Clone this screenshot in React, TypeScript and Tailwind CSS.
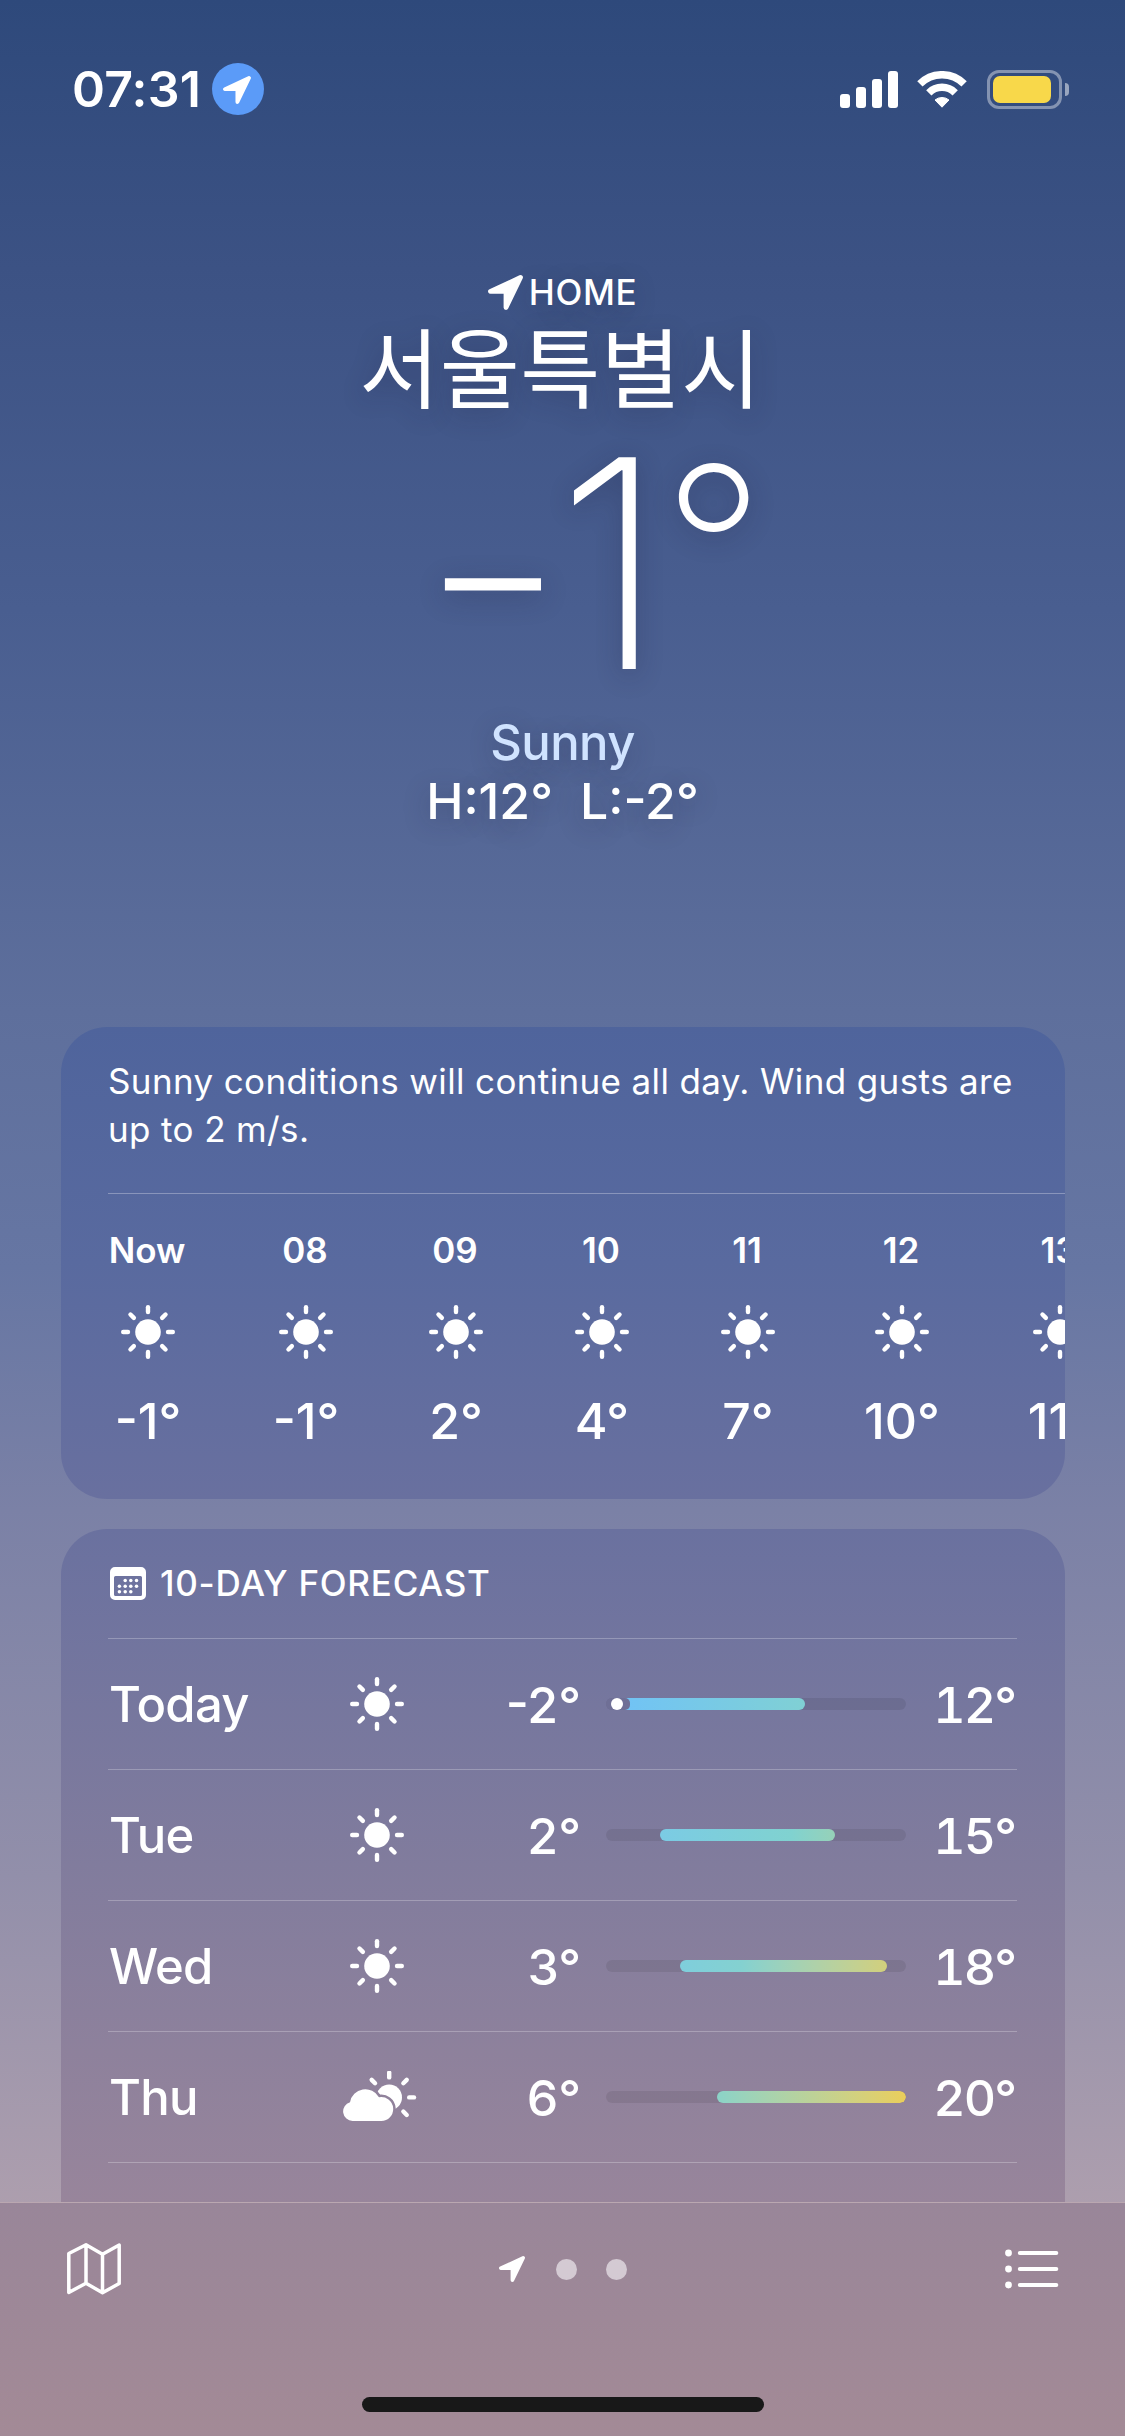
type Condition = "sunny" | "partly-cloudy";

const hours = [
  { label: "Now", temp: "-1°", width: "w-[78px]" },
  { label: "08", temp: "-1°", width: "w-[70px]" },
  { label: "09", temp: "2°", width: "w-[62px]" },
  { label: "10", temp: "4°", width: "w-[62px]" },
  { label: "11", temp: "7°", width: "w-[62px]" },
  { label: "12", temp: "10°", width: "w-[78px]" },
  { label: "13", temp: "11°", width: "w-[70px]" },
];

// start / end are pixels along the 300px temperature track
const days: {
  day: string;
  icon: Condition;
  low: string;
  high: string;
  start: number;
  end: number;
  fill: string;
  now?: boolean;
}[] = [
  { day: "Today", icon: "sunny", low: "-2°", high: "12°", start: 5, end: 199, fill: "from-[#70c2f7] to-[#80d0d4]", now: true },
  { day: "Tue", icon: "sunny", low: "2°", high: "15°", start: 54, end: 229, fill: "from-[#7bcbe4] via-[#80d2d0] via-75% to-[#96d1b8]" },
  { day: "Wed", icon: "sunny", low: "3°", high: "18°", start: 74, end: 281, fill: "from-[#7fcedc] via-[#84d1d0] via-30% to-[#d2cf7c]" },
  { day: "Thu", icon: "partly-cloudy", low: "6°", high: "20°", start: 111, end: 300, fill: "from-[#8bd3c8] via-[#bcd298] to-[#eace5a]" },
];

function Arrow({ className }: { className?: string }) {
  return (
    <svg viewBox="0 0 35 35" className={className}>
      <path
        d="M32.5 2.5 2.5 16.4H18V32.5Z"
        fill="currentColor"
        stroke="currentColor"
        strokeWidth="4.8"
        strokeLinejoin="round"
      />
    </svg>
  );
}

function Rays({ angles }: { angles: number[] }) {
  return (
    <g stroke="currentColor" strokeWidth="4.4" strokeLinecap="round">
      {angles.map((a) => (
        <path key={a} d="M0-20V-24.8" transform={`rotate(${a})`} />
      ))}
    </g>
  );
}

function Sun() {
  return (
    <svg viewBox="-27 -27 54 54" className="w-[54px] h-[54px] shrink-0">
      <circle r="12.8" fill="currentColor" />
      <Rays angles={[0, 45, 90, 135, 180, 225, 270, 315]} />
    </svg>
  );
}

function PartlyCloudy() {
  const cloud =
    "M9.6 50A9.6 9.6 0 0 1 7 31.2A15.6 15.6 0 0 1 36 26.2A12 12 0 1 1 38 50Z";
  return (
    <svg viewBox="0 0 74 52" className="w-[74px] h-[52px] ml-[5px] shrink-0">
      <mask id="behind-cloud">
        <rect width="74" height="52" fill="white" />
        <path d={cloud} fill="black" stroke="black" strokeWidth="5" />
      </mask>
      <circle cx="46.2" cy="26.4" r="12.8" fill="currentColor" mask="url(#behind-cloud)" />
      <g transform="translate(46.2 26.4)">
        <Rays angles={[-45, 0, 45, 90, 135]} />
      </g>
      <path d={cloud} fill="currentColor" />
    </svg>
  );
}

function CalendarIcon() {
  const dots = [
    [15.2, 13.6], [20.8, 13.6], [26.5, 13.6],
    [9.4, 19.2], [15.2, 19.2], [20.8, 19.2], [26.5, 19.2],
    [9.4, 24.7], [15.2, 24.7], [20.8, 24.7],
  ];
  return (
    <svg viewBox="0 0 36 33" className="w-9 h-[33px]">
      <path
        fill="currentColor"
        fillRule="evenodd"
        d="M5 0H31A5 5 0 0 1 36 5V28A5 5 0 0 1 31 33H5A5 5 0 0 1 0 28V5A5 5 0 0 1 5 0ZM5.5 9A1.5 1.5 0 0 0 4 10.5V27.5A1.5 1.5 0 0 0 5.5 29H30.5A1.5 1.5 0 0 0 32 27.5V10.5A1.5 1.5 0 0 0 30.5 9Z"
      />
      {dots.map(([x, y]) => (
        <circle key={`${x}-${y}`} cx={x} cy={y} r="1.75" fill="currentColor" />
      ))}
    </svg>
  );
}

function StatusBar() {
  return (
    <div className="flex items-center h-[52px] mt-[63px] pl-[72px] pr-14">
      <span className="w-[140px] text-[50px] leading-[52px] font-semibold tracking-[0.2px]">
        07:31
      </span>
      <span className="flex items-center justify-center w-[52px] h-[52px] rounded-full bg-[#5b9bf8]">
        <Arrow className="w-7 h-7 -ml-0.5 mt-0.5" />
      </span>
      <div className="flex items-center ml-auto">
        <div className="flex items-end gap-1.5 h-[37px]">
          <i className="w-2.5 h-3.5 rounded-[3px] bg-white" />
          <i className="w-2.5 h-[21px] rounded-[3px] bg-white" />
          <i className="w-2.5 h-[29px] rounded-[3px] bg-white" />
          <i className="w-2.5 h-[37px] rounded-[3px] bg-white" />
        </div>
        <svg viewBox="0 0 50 37" fill="none" className="w-[50px] h-[37px] ml-[19px]">
          <path d="M2.9 12.9A31.2 31.2 0 0 1 47.1 12.9M11.8 21.8A18.7 18.7 0 0 1 38.2 21.8" stroke="currentColor" strokeWidth="7.5" />
          <path d="M18 29A11 11 0 0 1 32 29L25 36.2Z" fill="currentColor" stroke="currentColor" strokeLinejoin="round" />
        </svg>
        <div className="w-[75px] h-[39px] ml-5 p-[3px] border-[3px] border-white/40 rounded-[12px]">
          <div className="w-[58px] h-[27px] rounded-[7px] bg-[#f8d84a]" />
        </div>
        <div className="w-1 h-[13px] ml-[3px] rounded-r-full bg-white/50" />
      </div>
    </div>
  );
}

function CurrentWeather() {
  return (
    <div className="flex flex-col items-center mt-[159px] [text-shadow:0_6px_26px_rgba(30,30,60,0.3)]">
      <div className="flex items-center h-9 gap-1.5">
        <Arrow className="w-[35px] h-[35px]" />
        <span className="text-[35px] leading-9 font-medium tracking-[0.6px]">HOME</span>
      </div>
      <h1 className="h-[104px] mt-0.5 text-[87px] leading-[104px] font-normal tracking-[0.5px] -ml-1 whitespace-nowrap font-['Noto_Sans_CJK_KR',sans-serif]">
        서울특별시
      </h1>
      <div className="flex h-[294px] text-[291px] leading-[294px] font-extralight pl-[70px]">
        <span className="scale-x-115 translate-x-0.5 translate-y-1.5">-</span>
        <span>1</span>
        <span className="-ml-1 mr-1 text-[226px] leading-[262px] font-[240]">°</span>
      </div>
      <p className="mt-[5px] text-[49px] leading-[56px] font-medium tracking-[-0.6px] text-[#d0e3ff]">
        Sunny
      </p>
      <p className="flex gap-[27px] text-[50px] leading-[60px] font-medium">
        <span>H:12°</span>
        <span>L:-2°</span>
      </p>
    </div>
  );
}

function HourlyCard() {
  return (
    <section className="h-[472px] mx-[61px] mt-[196px] w-[1004px] rounded-[46px] overflow-hidden bg-linear-to-b from-[#4f649c] via-[#596a9f] to-[#69709f]">
      <p className="pt-[30px] pl-[47px] h-[166px] text-[35px] leading-[48px] tracking-[0.37px]">
        Sunny conditions will continue all day. Wind gusts are
        <br />
        up to 2 m/s.
      </p>
      <div className="h-px ml-[47px] bg-white/30" />
      <div className="flex gap-[84px] pl-12 pt-[34px]">
        {hours.map((h) => (
          <div key={h.label} className={`flex flex-col items-center shrink-0 ${h.width}`}>
            <span className="text-[35px] leading-[44px] font-semibold -ml-0.5">{h.label}</span>
            <div className="h-[54px] mt-[33px]">
              <Sun />
            </div>
            <span className="mt-9 text-[50px] leading-[52px] font-medium whitespace-nowrap">{h.temp}</span>
          </div>
        ))}
      </div>
    </section>
  );
}

function ForecastCard() {
  return (
    <section className="h-[673px] mt-[30px] ml-[61px] w-[1004px] pl-[47px] pr-12 rounded-t-[46px] overflow-hidden bg-linear-to-b from-[#6a719f] via-[#817c9d] to-[#98859b]">
      <h2 className="flex items-center h-[109px] gap-3.5 pl-0.5 text-[35px] leading-[44px] font-medium tracking-[0.75px]">
        <CalendarIcon />
        <span className="-mt-px">10-DAY FORECAST</span>
      </h2>
      {days.map((d) => (
        <div key={d.day} className="flex items-center h-[131px] border-t border-white/25 text-[50px] leading-[52px] font-medium">
          <span className="w-[208px] mt-0.5 pl-px text-[49px] tracking-[-0.7px]">{d.day}</span>
          <div className="flex justify-center w-[122px]">
            {d.icon === "sunny" ? <Sun /> : <PartlyCloudy />}
          </div>
          <span className="w-[143px] mt-px text-right">{d.low}</span>
          <div className="relative w-[300px] h-3 ml-[25px] rounded-full bg-black/8 overflow-hidden">
            <div
              className={`h-full rounded-full bg-linear-to-r ${d.fill}`}
              style={{ marginLeft: d.start, width: d.end - d.start }}
            />
            {d.now && (
              <div className="absolute left-0 top-0 flex items-center justify-end w-6 h-3 pr-[7px] rounded-r-[5px] bg-[#6f6f96]">
                <i className="w-3 h-3 rounded-full bg-white" />
              </div>
            )}
          </div>
          <span className="ml-auto mr-0.5 mt-px tabular-nums tracking-[-2px]">{d.high}</span>
        </div>
      ))}
      <div className="h-px bg-white/25" />
    </section>
  );
}

function Toolbar() {
  return (
    <nav className="flex flex-col h-[234px] border-t border-white/25 bg-linear-to-b from-[#998699] to-[#a38a96]">
      <div className="flex items-center justify-between h-[132px] pl-[66px] pr-[66px]">
        <svg viewBox="0 0 56 54" fill="none" stroke="currentColor" strokeWidth="3.5" strokeLinejoin="round" className="w-14 h-[54px]">
          <path d="M2.8 11.5 20 2.8 36.5 12.2 53.2 3V41.5L36.5 50.8 20 41.2 2.8 50.5ZM20 2.8V41.2M36.5 12.2V50.8" />
        </svg>
        <div className="flex items-center mr-0.5">
          <Arrow className="w-[26px] h-[26px] -mt-px" />
          <i className="w-[21px] h-[21px] ml-[31px] rounded-full bg-[#d4cad3]" />
          <i className="w-[21px] h-[21px] ml-[29px] rounded-full bg-[#d4cad3]" />
        </div>
        <svg viewBox="0 0 54 40" className="w-[54px] h-10" fill="currentColor">
          {[4, 20, 36].map((y) => (
            <g key={y}>
              <circle cx="3.5" cy={y} r="3.4" />
              <rect x="12.8" y={y - 2} width="40.5" height="4" rx="2" />
            </g>
          ))}
        </svg>
      </div>
      <div className="w-[402px] h-[15px] mt-[62px] self-center rounded-full bg-[#181818]" />
    </nav>
  );
}

export default function App() {
  return (
    <div className="flex flex-col w-[1125px] h-[2436px] overflow-hidden text-white font-['Inter','Liberation_Sans',sans-serif] bg-linear-[180deg,#2e497b_0%,#3c5284_11%,#495e90_25%,#5e6f9c_41.5%,#6676a3_52%,#7b81a6_62%,#928faa_77%,#ae9fae_91%]">
      <StatusBar />
      <CurrentWeather />
      <HourlyCard />
      <ForecastCard />
      <Toolbar />
    </div>
  );
}
